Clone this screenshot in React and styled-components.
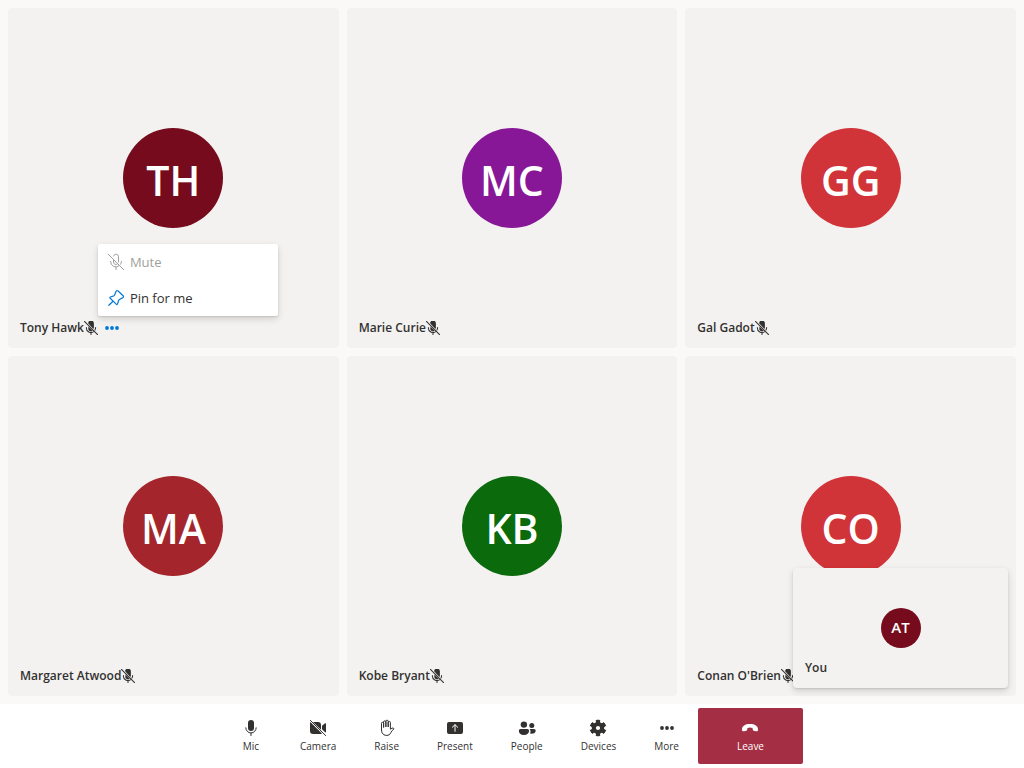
import React from "react";
import styled, { createGlobalStyle, css } from "styled-components";

const GlobalStyle = createGlobalStyle`
  *, *::before, *::after { box-sizing: border-box; }
  body {
    margin: 0;
    background: #faf9f8;
    color: #323130;
    font-family: "Open Sans", "Noto Sans", sans-serif;
  }
  button { font-family: inherit; color: inherit; cursor: pointer; }
`;

const Call = styled.div`
  display: flex;
  flex-direction: column;
  min-height: 100vh;
`;

const Stage = styled.main`
  position: relative;
  display: flex;
  flex: 1;
  padding: 8px;
`;

const Gallery = styled.div`
  display: grid;
  flex: 1;
  grid-template-columns: repeat(3, 1fr);
  grid-auto-rows: 1fr;
  gap: 8px;
`;

const tileSurface = css`
  display: grid;
  place-items: center;
  background: #f3f2f1;
  border-radius: 4px;
`;

const Tile = styled.section`
  ${tileSurface}
  position: relative;
  min-width: 0;
  min-height: 240px;
`;

const LocalTile = styled.section`
  ${tileSurface}
  position: absolute;
  right: 16px;
  bottom: 16px;
  width: 215px;
  height: 120px;
  box-shadow: 0 3px 7px rgba(0, 0, 0, 0.14), 0 1px 2px rgba(0, 0, 0, 0.11);
`;

const Avatar = styled.div`
  display: flex;
  align-items: center;
  justify-content: center;
  width: ${(p) => (p.$small ? 40 : 100)}px;
  height: ${(p) => (p.$small ? 40 : 100)}px;
  padding-top: ${(p) => (p.$small ? 0 : 4)}px;
  padding-bottom: ${(p) => (p.$small ? 2 : 0)}px;
  border-radius: 50%;
  background: ${(p) => p.$color};
  color: #fff;
  font-size: ${(p) => (p.$small ? 15 : 41)}px;
  font-weight: 600;
  line-height: 1;
`;

const NameBar = styled.div`
  position: absolute;
  left: 12px;
  bottom: 12px;
  display: flex;
  align-items: center;
  height: 16px;
  font-size: 12px;
  font-weight: 600;
  line-height: 16px;
  white-space: nowrap;
`;

const MenuAnchor = styled.div`
  position: relative;
  display: flex;
  margin-left: 4px;
`;

const DotsButton = styled.button`
  display: flex;
  padding: 0;
  border: 0;
  background: none;
  color: #0078d4;
`;

const Menu = styled.div`
  position: absolute;
  left: -4px;
  bottom: 22px;
  width: 180px;
  z-index: 2;
  background: #fff;
  border-radius: 2px;
  box-shadow: 0 3px 7px rgba(0, 0, 0, 0.14), 0 1px 2px rgba(0, 0, 0, 0.11);
`;

const MenuItem = styled.button`
  display: flex;
  align-items: center;
  width: 100%;
  height: 36px;
  padding: 0 8px;
  gap: 4px;
  border: 0;
  background: none;
  font-size: 13px;
  line-height: 20px;

  svg { color: #0078d4; }
  &:disabled, &:disabled svg { color: #a19f9d; cursor: default; }
`;

const ControlBar = styled.footer`
  display: flex;
  justify-content: center;
  padding: 4px 0;
  background: #fff;
`;

const Control = styled.button`
  display: flex;
  flex-direction: column;
  align-items: center;
  justify-content: center;
  min-width: 60px;
  height: 56px;
  padding: 0 ${(p) => (p.$danger ? 39 : 19)}px;
  border: 0;
  border-radius: 2px;
  background: ${(p) => (p.$danger ? "#a42e43" : "transparent")};
  color: ${(p) => (p.$danger ? "#fff" : "#323130")};
`;

const ControlLabel = styled.span`
  font-size: 10px;
  line-height: 16px;
`;

const Icon = ({ size = 20, viewBox = "0 0 20 20", children }) => (
  <svg
    width={size}
    height={size}
    viewBox={viewBox}
    fill="none"
    stroke="currentColor"
    strokeLinecap="round"
    strokeLinejoin="round"
    aria-hidden="true"
  >
    {children}
  </svg>
);

const MicIcon = () => (
  <Icon>
    <rect x="7" y="2" width="6" height="11" rx="3" fill="currentColor" stroke="none" />
    <path d="M4.8 9.8a5.2 5.2 0 0 0 10.4 0M10 15v2.6" />
  </Icon>
);

const MicOffIcon = () => (
  <Icon size={14} viewBox="2 2 16 16">
    <path
      d="M7 8.2 12 13.1A3 3 0 0 1 7 10.3zM6.7 4.6A3.3 3.3 0 0 1 13.3 5v5l-.6 1z"
      fill="currentColor"
      stroke="none"
    />
    <path d="M4.7 9.5a5.3 5.3 0 0 0 8.5 4.6M15.3 9.5q0 1.6-.8 2.8M10 15.2v2.3M2.5 2.5l15 15" strokeWidth="1.2" />
  </Icon>
);

const MicOffOutlineIcon = () => (
  <Icon>
    <path d="M7.5 7.5V10a2.5 2.5 0 0 0 4.2 1.8M7.6 4a2.5 2.5 0 0 1 4.9.8V10M4.6 9.5a5.3 5.3 0 0 0 8.7 4.2M15.4 9.5q0 1.5-.7 2.7M10 15.1v2.4M2.2 2.2l15.6 15.6" />
  </Icon>
);

const PinIcon = () => (
  <Icon>
    <path d="M10.2 3.1q.8-1.1 1.9-.1l5 4.7q1 1.1-.2 1.9l-3.5 1.9q-.5.3-.7.8l-1.2 3.7q-.5 1-1.3.2L4.2 10.3q-.8-.8.2-1.3l3.3-1.1q.5-.2.8-.7zM7 13.2l-4.2 4.1" strokeWidth="1.2" />
  </Icon>
);

const CameraOffIcon = () => (
  <Icon>
    <g fill="currentColor" stroke="none">
      <path d="M2.3 4.1 14 15.4q-.9.6-2 .6H5a3 3 0 0 1-3-3V5q0-.5.3-.9z" />
      <path d="M5 4h5a3 3 0 0 1 3 3v4.8zM14 7.8l2.7-2.2q1.3-.8 1.3.6v7.6q0 .7-.6.8L14 11.2z" />
    </g>
    <path d="M2.4 2.4 17.7 17.6" />
  </Icon>
);

const HandIcon = () => (
  <Icon>
    <path d="M4.5 11.5V5.3a1.05 1.05 0 0 1 2.1 0V9.5 4a1.15 1.15 0 0 1 2.3 0v5V3.3a1.15 1.15 0 0 1 2.3 0V9 4.5a1.1 1.1 0 0 1 2.2 0v6.7l1.6-1.1q1.6-.5 2 .7-2 1.4-3.1 3.8-1.2 2.9-4 2.9-3.6 0-4.8-2.6-.6-1.5-.6-3.4z" />
  </Icon>
);

const PresentIcon = () => (
  <Icon>
    <rect x="2" y="4" width="16" height="12" rx="2" fill="currentColor" stroke="none" />
    <path d="M10 13.3V6.8M7.3 9.3 10 6.7l2.7 2.6" stroke="#fff" />
  </Icon>
);

const PeopleIcon = () => (
  <Icon>
    <g fill="currentColor" stroke="none">
      <circle cx="6.9" cy="6.6" r="3.2" />
      <circle cx="14.8" cy="7.4" r="2.5" />
      <path d="M3.6 11h6.7a1.8 1.8 0 0 1 1.8 1.8c0 2.7-2 4.2-5.2 4.2s-5.1-1.5-5.1-4.2A1.8 1.8 0 0 1 3.6 11zM12.5 11H17a1.7 1.7 0 0 1 1.7 1.7c0 2.2-2.2 3.3-5.7 2.9q.5-1.1.5-2.6 0-1.2-1-2z" />
    </g>
  </Icon>
);

const GearIcon = () => (
  <Icon>
    <path
      fill="currentColor"
      stroke="none"
      fillRule="evenodd"
      d="M8.2 2.4Q10 1.8 11.8 2.4l.5 2.1 1.2.7 2.2-.6q1.3 1.3 1.9 3.2L16.1 9.4v1.3l1.5 1.5q-.6 1.9-1.9 3.2l-2.2-.6-1.2.7-.5 2.1q-1.8.6-3.6 0l-.5-2.1-1.2-.7-2.2.6Q3 14.1 2.4 12.2l1.5-1.5V9.4L2.4 7.8Q3 5.9 4.3 4.6l2.2.6 1.2-.7zM10 7.9a2.1 2.1 0 1 0 0 4.2 2.1 2.1 0 0 0 0-4.2z"
    />
    <path d="M8.2 2.4Q10 1.8 11.8 2.4M15.7 4.6q1.3 1.3 1.9 3.2M17.6 12.2q-.6 1.9-1.9 3.2M11.8 17.6q-1.8.6-3.6 0M4.3 15.4Q3 14.1 2.4 12.2M2.4 7.8Q3 5.9 4.3 4.6" />
  </Icon>
);

const DotsIcon = () => (
  <Icon>
    <g fill="currentColor" stroke="none">
      <circle cx="5" cy="10" r="1.9" />
      <circle cx="10" cy="10" r="1.9" />
      <circle cx="15" cy="10" r="1.9" />
    </g>
  </Icon>
);

const HangUpIcon = () => (
  <Icon>
    <path
      fill="currentColor"
      stroke="none"
      d="M10 6c4.8 0 8 2 8 5.4v.5c0 1-.8 1.6-1.8 1.4l-2-.4c-.9-.2-1.4-.8-1.5-1.7l-.2-1.3Q10 9.1 7.5 9.9l-.2 1.3c-.1.9-.6 1.5-1.5 1.7l-2 .4c-1 .2-1.8-.4-1.8-1.4v-.5C2 8 5.2 6 10 6z"
    />
  </Icon>
);

const participants = [
  { name: "Tony Hawk", initials: "TH", color: "#750b1c", menuOpen: true },
  { name: "Marie Curie", initials: "MC", color: "#881798" },
  { name: "Gal Gadot", initials: "GG", color: "#d13438" },
  { name: "Margaret Atwood", initials: "MA", color: "#a4262c" },
  { name: "Kobe Bryant", initials: "KB", color: "#0b6a0b" },
  { name: "Conan O'Brien", initials: "CO", color: "#d13438" },
];

const controls = [
  { label: "Mic", icon: MicIcon },
  { label: "Camera", icon: CameraOffIcon },
  { label: "Raise", icon: HandIcon },
  { label: "Present", icon: PresentIcon },
  { label: "People", icon: PeopleIcon },
  { label: "Devices", icon: GearIcon },
  { label: "More", icon: DotsIcon },
  { label: "Leave", icon: HangUpIcon, danger: true },
];

const ParticipantMenu = () => (
  <MenuAnchor>
    <DotsButton type="button" aria-label="More options" aria-haspopup="menu" aria-expanded="true">
      <DotsIcon />
    </DotsButton>
    <Menu role="menu">
      <MenuItem type="button" role="menuitem" disabled>
        <MicOffOutlineIcon />
        Mute
      </MenuItem>
      <MenuItem type="button" role="menuitem">
        <PinIcon />
        Pin for me
      </MenuItem>
    </Menu>
  </MenuAnchor>
);

export default function App() {
  return (
    <Call>
      <GlobalStyle />
      <Stage>
        <Gallery>
          {participants.map((p) => (
            <Tile key={p.name} aria-label={p.name}>
              <Avatar $color={p.color}>{p.initials}</Avatar>
              <NameBar>
                <span>{p.name}</span>
                <MicOffIcon />
                {p.menuOpen && <ParticipantMenu />}
              </NameBar>
            </Tile>
          ))}
        </Gallery>
        <LocalTile aria-label="You">
          <Avatar $small $color="#750b1c">AT</Avatar>
          <NameBar>You</NameBar>
        </LocalTile>
      </Stage>
      <ControlBar>
        {controls.map(({ label, icon: Glyph, danger }) => (
          <Control key={label} type="button" $danger={danger}>
            <Glyph />
            <ControlLabel>{label}</ControlLabel>
          </Control>
        ))}
      </ControlBar>
    </Call>
  );
}
